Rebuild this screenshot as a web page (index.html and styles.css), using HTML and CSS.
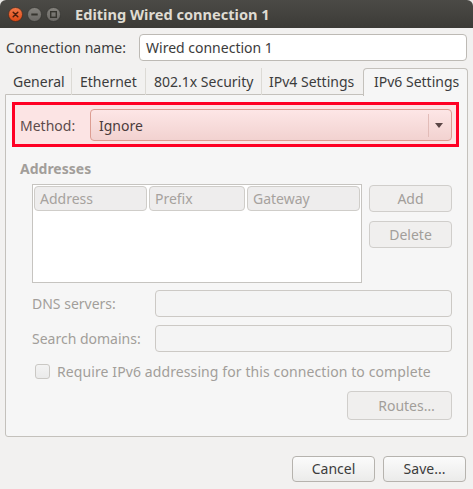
FILE: index.html
```html
<!DOCTYPE html>
<html>
<head>
<meta charset="utf-8">
<title>Editing Wired connection 1</title>
<link rel="stylesheet" href="styles.css">
</head>
<body>
<div class="window">
  <div class="titlebar">
    <div class="wbtns">
      <span class="wbtn">
        <svg width="15" height="15" viewBox="0 0 15 15">
          <defs><linearGradient id="gc" x1="0" y1="0" x2="0" y2="1"><stop offset="0" stop-color="#f47a4a"/><stop offset="1" stop-color="#dd4814"/></linearGradient></defs>
          <circle cx="7.5" cy="7.5" r="7" fill="url(#gc)" stroke="#3a2418" stroke-width="0.6"/>
          <path d="M5.2 5.2 L9.8 9.8 M9.8 5.2 L5.2 9.8" stroke="#4a1d0c" stroke-width="1.5" stroke-linecap="round"/>
        </svg>
      </span>
      <span class="wbtn">
        <svg width="15" height="15" viewBox="0 0 15 15">
          <defs><linearGradient id="gm" x1="0" y1="0" x2="0" y2="1"><stop offset="0" stop-color="#85837e"/><stop offset="1" stop-color="#6a6864"/></linearGradient></defs>
          <circle cx="7.5" cy="7.5" r="7" fill="url(#gm)" stroke="#2e2d2a" stroke-width="0.6"/>
          <path d="M4.3 7.5 H10.7" stroke="#36352f" stroke-width="1.8"/>
        </svg>
      </span>
      <span class="wbtn">
        <svg width="15" height="15" viewBox="0 0 15 15">
          <circle cx="7.5" cy="7.5" r="7" fill="url(#gm)" stroke="#2e2d2a" stroke-width="0.6"/>
          <rect x="4.7" y="4.7" width="5.6" height="5.6" fill="none" stroke="#36352f" stroke-width="1.4"/>
        </svg>
      </span>
    </div>
    <div class="title">Editing Wired connection 1</div>
  </div>

  <div class="content">
    <div class="name-row">
      <label class="name-label">Connection name:</label>
      <div class="entry">Wired connection 1</div>
    </div>

    <div class="notebook">
      <div class="tabs">
        <div class="tab tab-general">General</div>
        <div class="tab tab-ethernet">Ethernet</div>
        <div class="tab tab-security">802.1x Security</div>
        <div class="tab tab-ipv4">IPv4 Settings</div>
        <div class="tab tab-active">IPv6 Settings</div>
      </div>
      <div class="page">
        <div class="highlight">
          <span class="method-label">Method:</span>
          <div class="combo">
            <span class="combo-text">Ignore</span>
            <span class="combo-sep"></span>
            <span class="combo-arrow"></span>
          </div>
        </div>

        <div class="section">
          <div class="heading">Addresses</div>
          <div class="addr-row">
            <div class="table">
              <div class="thead">
                <div class="th th-addr">Address</div>
                <div class="th th-prefix">Prefix</div>
                <div class="th th-gw">Gateway</div>
              </div>
            </div>
            <div class="side-btns">
              <div class="btn btn-disabled">Add</div>
              <div class="btn btn-disabled">Delete</div>
            </div>
          </div>

          <div class="field-row field-first">
            <span class="field-label">DNS servers:</span>
            <div class="field"></div>
          </div>
          <div class="field-row field-second">
            <span class="field-label">Search domains:</span>
            <div class="field"></div>
          </div>

          <div class="check-row">
            <span class="checkbox"></span>
            <span class="check-label">Require IPv6 addressing for this connection to complete</span>
          </div>

          <div class="routes-row">
            <div class="btn btn-disabled btn-routes">Routes…</div>
          </div>
        </div>
      </div>
    </div>

    <div class="footer">
      <div class="btn btn-footer">Cancel</div>
      <div class="btn btn-footer">Save...</div>
    </div>
  </div>
</div>
</body>
</html>
```

FILE: styles.css
```css
html, body {
  margin: 0;
  padding: 0;
}
body {
  width: 473px;
  height: 489px;
  background: #e9e8e6;
  font-family: "Noto Sans", "Open Sans", sans-serif;
  font-size: 14px;
  color: #3c3c3c;
  overflow: hidden;
}
.window {
  width: 473px;
  height: 489px;
  background: #f2f1f0;
  border-radius: 6px 6px 0 0;
  overflow: hidden;
  display: flex;
  flex-direction: column;
}

/* title bar */
.titlebar {
  height: 28px;
  flex: none;
  background: linear-gradient(#4b4a46, #3c3b37);
  display: flex;
  align-items: center;
  padding-left: 8px;
  box-sizing: border-box;
}
.wbtns {
  display: flex;
  gap: 4px;
  margin-top: 1px;
}
.wbtn {
  width: 15px;
  height: 15px;
  display: block;
}
.wbtn svg {
  display: block;
}
.title {
  margin-left: 14px;
  color: #dfdbd2;
  font-weight: bold;
  font-size: 14.6px;
}

/* content */
.content {
  flex: 1;
  display: flex;
  flex-direction: column;
  padding: 6px 5px 0 5px;
}
.name-row {
  display: flex;
  align-items: center;
  height: 27px;
}
.name-label {
  width: 133px;
  padding-left: 1px;
  flex: none;
}
.entry {
  flex: 1;
  height: 27px;
  box-sizing: border-box;
  margin-right: 1px;
  background: #ffffff;
  border: 1px solid #bdbab5;
  border-radius: 4px;
  padding-left: 6px;
  line-height: 25px;
}

/* notebook */
.notebook {
  margin-top: 7px;
  display: flex;
  flex-direction: column;
}
.tabs {
  display: flex;
  height: 27px;
  align-items: stretch;
  position: relative;
  z-index: 1;
}
.tab {
  box-sizing: border-box;
  line-height: 27px;
  padding-left: 8px;
  border-right: 1px solid #dcdad5;
  white-space: nowrap;
}
.tab-general { width: 67px; padding-left: 8px; }
.tab-ethernet { width: 74px; padding-left: 8px; }
.tab-security { width: 116px; padding-left: 8px; }
.tab-ipv4 { width: 101px; padding-left: 7px; border-right: none; }
.tab-active {
  width: 105px;
  height: 28px;
  padding-left: 10px;
  background: #f6f6f6;
  border: 1px solid #c4c1bc;
  border-bottom: none;
  border-radius: 4px 4px 0 0;
  line-height: 26px;
}
.page {
  margin-top: -1px;
  height: 343px;
  box-sizing: border-box;
  background: #f6f6f6;
  border: 1px solid #c4c1bc;
  border-radius: 0 0 3px 3px;
  padding-top: 7px;
}

/* highlighted method row */
.highlight {
  margin: 0 8px 0 6px;
  height: 45px;
  box-sizing: border-box;
  border: 3px solid #ff0024;
  background: #fce4e4;
  display: flex;
  align-items: center;
  padding: 1px 4px 0 5px;
}
.method-label {
  width: 70px;
  flex: none;
  color: #5c4b4b;
}
.combo {
  flex: 1;
  height: 32px;
  box-sizing: border-box;
  border: 1px solid #dc9d92;
  border-radius: 4px;
  background: linear-gradient(#fde6e6, #f2d2d0);
  display: flex;
  align-items: center;
  padding-left: 8px;
  color: #4a3b3b;
}
.combo-text {
  flex: 1;
}
.combo-sep {
  width: 1px;
  height: 23px;
  background: #e2bcb8;
  margin-right: 6px;
}
.combo-arrow {
  width: 0;
  height: 0;
  border-left: 4px solid transparent;
  border-right: 4px solid transparent;
  border-top: 5px solid #5a4646;
  margin-right: 8px;
}

/* section */
.section {
  padding: 0 15px 0 14px;
  color: #a29e9a;
}
.heading {
  margin-top: 13px;
  height: 18px;
  line-height: 18px;
  font-weight: bold;
}
.addr-row {
  margin-top: 6px;
  padding-left: 12px;
  display: flex;
  gap: 7px;
}
.table {
  flex: 1;
  height: 99px;
  box-sizing: border-box;
  border: 1px solid #c6c4c0;
  background: #ffffff;
  padding: 1px;
}
.thead {
  display: flex;
  gap: 2px;
  height: 25px;
}
.th {
  box-sizing: border-box;
  border: 1px solid #cfcdc9;
  border-radius: 4px;
  background: #eeeded;
  line-height: 23px;
  padding-left: 5px;
  color: #a6a29e;
}
.th-addr { width: 113px; }
.th-prefix { width: 96px; }
.th-gw { flex: 1; }
.side-btns {
  width: 83px;
  display: flex;
  flex-direction: column;
  gap: 9px;
  padding-top: 1px;
}
.btn {
  box-sizing: border-box;
  border-radius: 4px;
  text-align: center;
}
.btn-disabled {
  height: 27px;
  line-height: 25px;
  border: 1px solid #d0cecb;
  background: #f0efee;
  color: #a29e9a;
}
.field-row {
  display: flex;
  align-items: center;
  height: 27px;
  padding-left: 12px;
}
.field-first { margin-top: 7px; }
.field-second { margin-top: 8px; }
.field-label {
  width: 123px;
  flex: none;
}
.field {
  flex: 1;
  height: 27px;
  box-sizing: border-box;
  border: 1px solid #ccc9c5;
  border-radius: 4px;
  background: #f4f4f4;
}
.check-row {
  margin-top: 11px;
  height: 16px;
  display: flex;
  align-items: center;
  padding-left: 15px;
}
.checkbox {
  width: 15px;
  height: 15px;
  box-sizing: border-box;
  border: 1px solid #cac8c4;
  border-radius: 3px;
  background: linear-gradient(#f3f3f3, #eaeaea);
  margin-right: 7px;
  flex: none;
}
.check-label {
  letter-spacing: 0.1px;
}
.routes-row {
  margin-top: 12px;
  display: flex;
  justify-content: flex-end;
}
.btn-routes {
  width: 105px;
  height: 29px;
  line-height: 27px;
  padding-left: 14px;
}

/* footer */
.footer {
  margin-top: 19px;
  display: flex;
  justify-content: flex-end;
  gap: 8px;
  padding-right: 2px;
}
.btn-footer {
  width: 83px;
  height: 26px;
  line-height: 24px;
  border: 1px solid #b6b3ae;
  background: linear-gradient(#fbfbfb, #ebebea);
  color: #3c3c3c;
}
```
